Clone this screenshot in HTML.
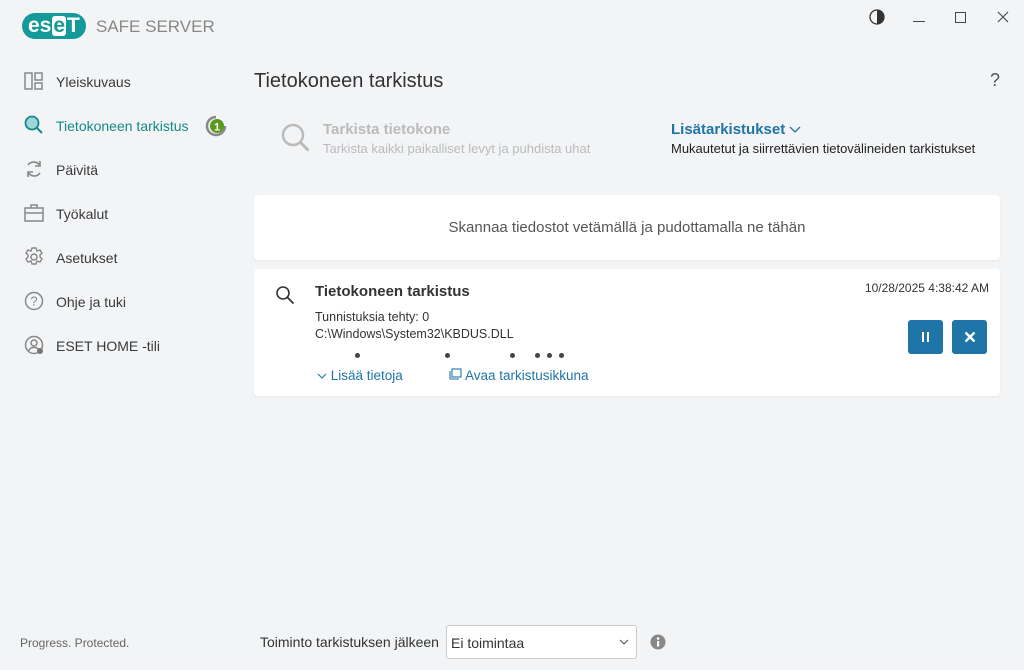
<!DOCTYPE html>
<html><head><meta charset="utf-8"><style>
*{margin:0;padding:0;box-sizing:border-box}
body{width:1024px;height:670px;background:#f3f4f6;font-family:"Liberation Sans",sans-serif;color:#333;position:relative;overflow:hidden;font-size:14px}
.a{position:absolute;white-space:nowrap}
.nav{position:absolute;left:24px;font-size:14px;color:#3a3a3a;white-space:nowrap}
.nav svg{position:absolute;left:0;top:-3px}
.nav span{position:absolute;left:32px;top:0;white-space:nowrap}
.card{position:absolute;background:#fff;border-radius:4px;box-shadow:0 1px 2px rgba(0,0,0,.06)}
.btn{position:absolute;width:35px;height:34px;background:#1f74a8;border-radius:3px}
.dot{position:absolute;width:5px;height:5px;border-radius:50%;background:#444}
</style></head><body>
<!-- logo -->
<div class="a" style="left:22px;top:13px;width:64px;height:26px;background:#159a9a;border-radius:13px"></div>
<div class="a" style="left:28px;top:13px;font:bold 21px/26px 'Liberation Sans',sans-serif;color:#fff;letter-spacing:0px">es<span style="display:inline-block;background:#fff;color:#159a9a;border-radius:3px;line-height:20px;padding:0 1px;margin:0 1px">e</span>T</div>
<div class="a" style="left:96px;top:17px;font-size:17px;color:#888">SAFE SERVER</div>
<!-- window controls -->
<svg class="a" style="left:869px;top:9px" width="16" height="16"><circle cx="8" cy="8" r="7" fill="none" stroke="#333" stroke-width="1.3"/><path d="M8 1a7 7 0 0 1 0 14z" fill="#333"/></svg>
<div class="a" style="left:913px;top:21px;width:12px;height:1px;background:#444"></div>
<div class="a" style="left:955px;top:12px;width:11px;height:11px;border:1px solid #444"></div>
<svg class="a" style="left:997px;top:11px" width="12" height="12"><path d="M1 1L11 11M11 1L1 11" stroke="#444" stroke-width="1.1"/></svg>
<div class="a" style="left:990px;top:70px;font-size:18px;color:#555">?</div>
<!-- sidebar -->
<div class="nav" style="top:74px"><svg width="20" height="20"><rect x="1" y="2" width="7" height="16" fill="none" stroke="#888" stroke-width="1.5"/><rect x="11" y="2" width="7" height="7" fill="none" stroke="#888" stroke-width="1.5"/><rect x="11" y="12" width="7" height="6" fill="none" stroke="#888" stroke-width="1.5"/></svg><span>Yleiskuvaus</span></div>
<div class="nav" style="top:118px;color:#16888a"><svg width="20" height="20"><circle cx="8" cy="8" r="6.5" fill="#9fd5d8" stroke="#16888a" stroke-width="1.8"/><path d="M13 13l5 5" stroke="#16888a" stroke-width="2"/></svg><span>Tietokoneen tarkistus</span></div>
<svg class="a" style="left:205px;top:115px" width="22" height="22"><path d="M11 2a9 9 0 1 0 9 9" fill="none" stroke="#888" stroke-width="2.5"/><circle cx="12" cy="11" r="7" fill="#5a9a1c"/><text x="12" y="15.5" font-size="11" font-weight="bold" fill="#fff" text-anchor="middle" font-family="Liberation Sans">1</text></svg>
<div class="nav" style="top:162px"><svg width="20" height="20"><path d="M16 7A7 7 0 0 0 4 6M4 13a7 7 0 0 0 12 1" fill="none" stroke="#888" stroke-width="1.6"/><path d="M16 2v5h-5M4 18v-5h5" fill="none" stroke="#888" stroke-width="1.6"/></svg><span>Päivitä</span></div>
<div class="nav" style="top:206px"><svg width="20" height="20"><rect x="1" y="5" width="18" height="13" fill="none" stroke="#888" stroke-width="1.5"/><path d="M7 5V2h6v3M1 10h18" fill="none" stroke="#888" stroke-width="1.5"/></svg><span>Työkalut</span></div>
<div class="nav" style="top:250px"><svg width="20" height="20"><circle cx="10" cy="10" r="3" fill="none" stroke="#888" stroke-width="1.5"/><path d="M8 1h4l1 3 3-1 2 3-2 2 0 2 2 2-2 3-3-1-1 3H8l-1-3-3 1-2-3 2-2V8L2 6l2-3 3 1z" fill="none" stroke="#888" stroke-width="1.4"/></svg><span>Asetukset</span></div>
<div class="nav" style="top:294px"><svg width="20" height="20"><circle cx="10" cy="10" r="8.5" fill="none" stroke="#888" stroke-width="1.5"/><text x="10" y="14.5" font-size="13" fill="#888" text-anchor="middle" font-family="Liberation Sans">?</text></svg><span>Ohje ja tuki</span></div>
<div class="nav" style="top:338px"><svg width="22" height="22"><circle cx="10" cy="10" r="8.5" fill="none" stroke="#888" stroke-width="1.5"/><circle cx="10" cy="8" r="3" fill="none" stroke="#888" stroke-width="1.5"/><path d="M4.5 16a6 6 0 0 1 11 0" fill="none" stroke="#888" stroke-width="1.5"/><circle cx="16" cy="16" r="3" fill="#777"/></svg><span>ESET HOME -tili</span></div>
<div class="a" style="left:20px;top:636px;font-size:12px;color:#666">Progress. Protected.</div>
<!-- main -->
<div class="a" style="left:254px;top:70px;font-size:20px;color:#333">Tietokoneen tarkistus</div>
<svg class="a" style="left:280px;top:122px" width="34" height="34"><circle cx="13" cy="13" r="10" fill="none" stroke="#bbb" stroke-width="2.5"/><path d="M20.5 20.5l8 8" stroke="#bbb" stroke-width="3"/></svg>
<div class="a" style="left:323px;top:121px;font-size:15px;font-weight:bold;color:#bbb">Tarkista tietokone</div>
<div class="a" style="left:323px;top:141px;font-size:13px;color:#bbb">Tarkista kaikki paikalliset levyt ja puhdista uhat</div>
<div class="a" style="left:671px;top:121px;font-size:15px;font-weight:bold;color:#1f74a8">Lisätarkistukset <svg width="12" height="8"><path d="M1 1l5 5 5-5" fill="none" stroke="#1f74a8" stroke-width="1.3"/></svg></div>
<div class="a" style="left:671px;top:141px;font-size:13px;color:#222">Mukautetut ja siirrettävien tietovälineiden tarkistukset</div>
<div class="card" style="left:254px;top:195px;width:746px;height:65px"><div class="a" style="left:0;width:746px;text-align:center;top:24px;font-size:15px;color:#555">Skannaa tiedostot vetämällä ja pudottamalla ne tähän</div></div>
<div class="card" style="left:254px;top:269px;width:746px;height:127px">
<svg class="a" style="left:21px;top:16px" width="22" height="22"><circle cx="8" cy="8" r="6" fill="none" stroke="#333" stroke-width="1.6"/><path d="M12.5 12.5l6 6" stroke="#333" stroke-width="1.8"/></svg>
<div class="a" style="left:61px;top:14px;font-size:15px;font-weight:bold;color:#333">Tietokoneen tarkistus</div>
<div class="a" style="right:11px;top:12px;font-size:12px;color:#333">10/28/2025 4:38:42 AM</div>
<div class="a" style="left:61px;top:41px;font-size:12.5px;color:#333">Tunnistuksia tehty: 0</div>
<div class="a" style="left:61px;top:58px;font-size:12.5px;color:#333">C:\Windows\System32\KBDUS.DLL</div>
<div class="dot" style="left:101px;top:84px"></div><div class="dot" style="left:191px;top:84px"></div><div class="dot" style="left:256px;top:84px"></div><div class="dot" style="left:281px;top:84px"></div><div class="dot" style="left:293px;top:84px"></div><div class="dot" style="left:305px;top:84px"></div>
<div class="a" style="left:63px;top:99px;font-size:13.5px;color:#1f74a8"><svg width="10" height="8"><path d="M1 2l4 4 4-4" fill="none" stroke="#1f74a8" stroke-width="1.1"/></svg> Lisää tietoja</div>
<div class="a" style="left:195px;top:99px;font-size:13.5px;color:#1f74a8"><svg width="13" height="12"><rect x="3" y="1" width="9" height="8" fill="none" stroke="#1f74a8" stroke-width="1.1"/><path d="M1 3v8h9" fill="none" stroke="#1f74a8" stroke-width="1.1"/></svg> Avaa tarkistusikkuna</div>
<div class="btn" style="left:654px;top:51px"><div class="a" style="left:14px;top:12px;width:2px;height:10px;background:#fff"></div><div class="a" style="left:19px;top:12px;width:2px;height:10px;background:#fff"></div></div>
<div class="btn" style="left:698px;top:51px"><svg class="a" style="left:12px;top:11px" width="12" height="12"><path d="M1.5 1.5l9 9M10.5 1.5l-9 9" stroke="#fff" stroke-width="2.4"/></svg></div>
</div>
<div class="a" style="left:260px;top:634px;font-size:14px;color:#333">Toiminto tarkistuksen jälkeen</div>
<div class="a" style="left:446px;top:625px;width:191px;height:34px;background:#fff;border:1px solid #ccc;border-radius:3px"><span class="a" style="left:4px;top:9px;font-size:14px;color:#333">Ei toimintaa</span><svg class="a" style="left:172px;top:13px" width="10" height="7"><path d="M1 1l4 4 4-4" fill="none" stroke="#555" stroke-width="1.1"/></svg></div>
<svg class="a" style="left:650px;top:634px" width="16" height="16"><circle cx="8" cy="8" r="7.5" fill="#888"/><rect x="7" y="7" width="2.2" height="5.5" fill="#fff"/><circle cx="8.1" cy="4.5" r="1.3" fill="#fff"/></svg>
</body></html>
